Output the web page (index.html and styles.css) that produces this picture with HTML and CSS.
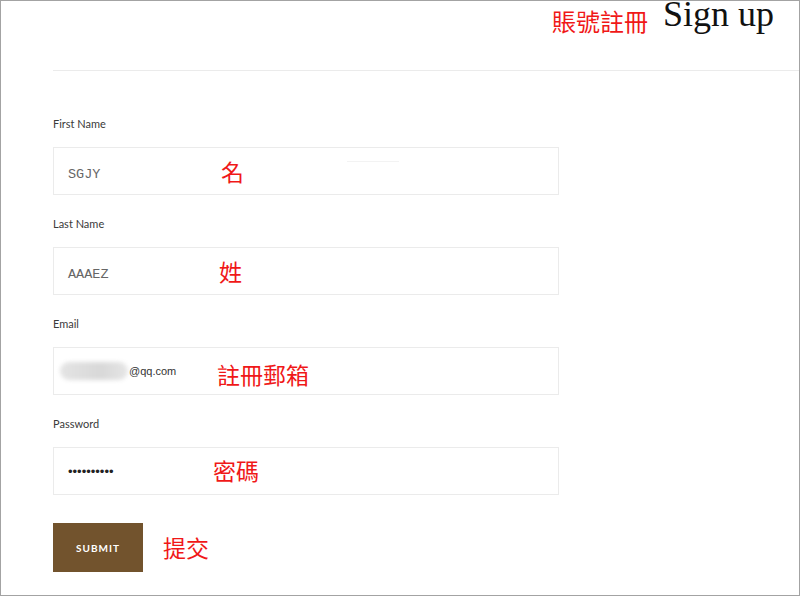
FILE: index.html
```html
<!DOCTYPE html>
<html>
<head>
<meta charset="utf-8">
<link rel="stylesheet" href="styles.css">
</head>
<body>
<div class="frame">
  <header class="header">
    <span class="note note-title">賬號註冊</span>
    <h1 class="title">Sign up</h1>
  </header>
  <form class="form">
    <div class="field">
      <label class="label">First Name</label>
      <div class="input">
        <span class="value mono">SGJY</span>
        <span class="note note-in note-first">名</span>
        <span class="ghost-line"></span>
      </div>
    </div>
    <div class="field">
      <label class="label">Last Name</label>
      <div class="input">
        <span class="value mono">AAAEZ</span>
        <span class="note note-in note-last">姓</span>
      </div>
    </div>
    <div class="field">
      <label class="label">Email</label>
      <div class="input">
        <span class="blur"></span>
        <span class="value email">@qq.com</span>
        <span class="note note-in note-email">註冊郵箱</span>
      </div>
    </div>
    <div class="field">
      <label class="label">Password</label>
      <div class="input">
        <span class="value dots">••••••••••</span>
        <span class="note note-in note-pass">密碼</span>
      </div>
    </div>
    <div class="actions">
      <button type="button" class="submit">SUBMIT</button>
      <span class="note note-submit">提交</span>
    </div>
  </form>
</div>
</body>
</html>
```

FILE: styles.css
```css
* { box-sizing: border-box; }
html, body { margin: 0; padding: 0; background: #fff; }
.frame {
  width: 800px;
  height: 596px;
  border: 1px solid #a3a3a3;
  position: relative;
}
.header {
  height: 70px;
  margin-left: 52px;
  border-bottom: 1px solid #ebebeb;
  display: flex;
  justify-content: flex-end;
  align-items: flex-start;
  padding-right: 25px;
}
.note {
  font-family: "Noto Sans CJK TC", "Noto Sans CJK SC", sans-serif;
  color: #f01818;
  font-size: 23px;
  line-height: 23px;
  font-weight: 400;
}
.note-title {
  margin-top: 8px;
  font-size: 24px;
  line-height: 24px;
}
.title {
  margin: 0 0 0 15px;
  font-family: "Liberation Serif", serif;
  font-weight: 400;
  font-size: 36px;
  line-height: 30px;
  margin-top: -2px;
  color: #111;
}
.form {
  padding: 46px 0 0 52px;
}
.field { margin-bottom: 22px; }
.label {
  display: block;
  font-family: "Lato", "Open Sans", sans-serif;
  font-size: 11px;
  line-height: 14px;
  color: #3a3a3a;
  margin-bottom: 16px;
}
.input {
  position: relative;
  width: 506px;
  height: 48px;
  border: 1px solid #ebebeb;
  display: flex;
  align-items: center;
  padding-left: 14px;
}
.value { color: #555; }
.mono {
  font-family: "Liberation Mono", monospace;
  font-size: 13.5px;
  color: #666;
  margin-top: 6px;
}
.email {
  font-family: "Liberation Sans", sans-serif;
  font-size: 11px;
  color: #333;
  margin-left: 1px;
}
.blur {
  width: 68px;
  height: 18px;
  margin-left: -8px;
  border-radius: 9px;
  background: linear-gradient(90deg, #e4e4e4, #d8d8d8 60%, #e6e6e6);
  filter: blur(2px);
}
.dots {
  font-family: "Liberation Sans", sans-serif;
  font-size: 13px;
  color: #222;
  letter-spacing: 0;
}
.note-in {
  position: absolute;
  top: 12px;
}
.note-first { left: 167px; }
.note-last { left: 165px; }
.note-email { left: 163px; top: 15px; }
.note-pass { left: 159px; top: 11px; }
.ghost-line {
  position: absolute;
  left: 293px;
  top: 13px;
  width: 52px;
  height: 1px;
  background: #f3f3f3;
}
.actions {
  display: flex;
  align-items: center;
  margin-top: 28px;
}
.submit {
  width: 90px;
  height: 49px;
  border: 0;
  background: #72532d;
  color: #fff;
  font-family: "Lato", "Open Sans", sans-serif;
  font-weight: 700;
  font-size: 10px;
  letter-spacing: 1px;
  padding: 0;
}
.note-submit { margin-left: 20px; }
```
